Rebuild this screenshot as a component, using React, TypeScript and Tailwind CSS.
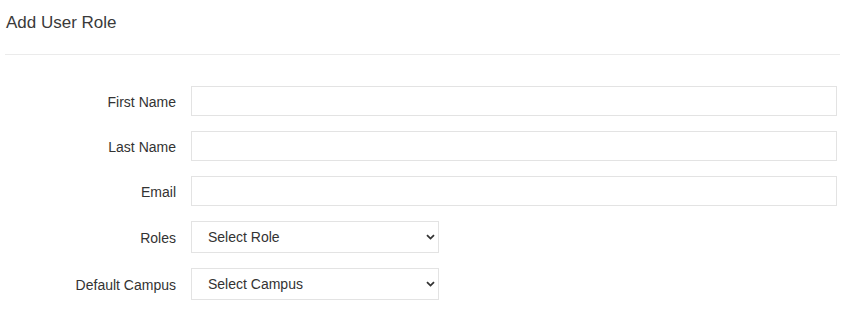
import React from "react";

const Chevron = () => (
  <svg width="9" height="6" viewBox="0 0 9 6" className="absolute right-[3px] top-1/2 -translate-y-1/2 pointer-events-none">
    <path d="M1 1.2 L4.5 4.6 L8 1.2" fill="none" stroke="#333" strokeWidth="1.8" />
  </svg>
);

function Row({ label, children }: { label: string; children: React.ReactNode }) {
  return (
    <div className="flex items-center">
      <label className="w-[176px] shrink-0 text-right text-[14px] leading-[18px] text-[#333] pt-[1px]">{label}</label>
      <div className="ml-[15px] flex-1 pr-[5px]">{children}</div>
    </div>
  );
}

function Select({ text }: { text: string }) {
  return (
    <div className="relative w-[248px] h-[32px] border border-[#e3e3e3] bg-white flex items-center">
      <span className="pl-[16px] text-[14px] text-[#333]">{text}</span>
      <Chevron />
    </div>
  );
}

export default function App() {
  return (
    <div className="w-[842px] h-[318px] bg-white" style={{ fontFamily: '"Liberation Sans", Arial, sans-serif' }}>
      <div className="pl-[6px] pt-[12px] h-[54px]">
        <h1 className="text-[17px] leading-[22px] text-[#3a3a3a] font-normal">Add User Role</h1>
      </div>
      <div className="ml-[5px] mr-[2px] border-t border-[#ebebeb]" />
      <div className="pt-[31px] flex flex-col">
        <Row label="First Name">
          <input className="w-full h-[30px] border border-[#e3e3e3] outline-none" />
        </Row>
        <div className="h-[15px]" />
        <Row label="Last Name">
          <input className="w-full h-[30px] border border-[#e3e3e3] outline-none" />
        </Row>
        <div className="h-[15px]" />
        <Row label="Email">
          <input className="w-full h-[30px] border border-[#e3e3e3] outline-none" />
        </Row>
        <div className="h-[15px]" />
        <Row label="Roles">
          <Select text="Select Role" />
        </Row>
        <div className="h-[15px]" />
        <Row label="Default Campus">
          <Select text="Select Campus" />
        </Row>
      </div>
    </div>
  );
}
